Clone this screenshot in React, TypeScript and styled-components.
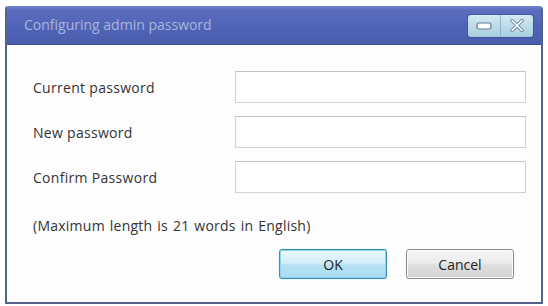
import React from "react";
import styled, { createGlobalStyle } from "styled-components";

const Global = createGlobalStyle`
  html, body { margin: 0; padding: 0; background: #ffffff; }
  body { font-family: "Open Sans", "Noto Sans", sans-serif; }
`;

const Page = styled.div`
  width: 548px;
  height: 306px;
  padding: 6px 0 0 5px;
  box-sizing: border-box;
`;

const Window = styled.div`
  width: 538px;
  height: 298px;
  box-sizing: border-box;
  border: 2px solid #56628e;
  border-top: none;
  border-radius: 3px 4px 0 0;
  background: #fdfdfe;
  display: flex;
  flex-direction: column;
  overflow: hidden;
`;

const TitleBar = styled.div`
  height: 38px;
  flex: none;
  display: flex;
  align-items: center;
  justify-content: space-between;
  padding: 0 8px 0 17px;
  background: linear-gradient(#6f82c8 0%, #5a6cbd 12%, #5064b6 55%, #4a5cae 100%);
  border-bottom: 1px solid #3d4c8e;
`;

const Title = styled.span`
  font-size: 14px;
  color: #a9b5dc;
  margin-top: -1px;
`;

const Controls = styled.div`
  display: flex;
  height: 22px;
  border-radius: 3px;
  overflow: hidden;
  background: linear-gradient(#d3e8f0, #a9cfe0);
  box-shadow: 0 0 0 1px rgba(40, 60, 120, 0.35);
  margin-top: 1px;
`;

const CtrlBtn = styled.div<{ $divider?: boolean }>`
  width: 32px;
  height: 22px;
  display: flex;
  align-items: center;
  justify-content: center;
  border-left: ${(p) => (p.$divider ? "1px solid #8fb3c7" : "none")};
`;

const Body = styled.div`
  flex: 1;
  padding: 26px 15px 0 26px;
  display: flex;
  flex-direction: column;
`;

const Form = styled.div`
  display: grid;
  grid-template-columns: 202px 291px;
  row-gap: 13px;
  align-items: center;
`;

const Label = styled.label`
  font-size: 14px;
  letter-spacing: 0.3px;
  color: #333333;
`;

const Input = styled.div`
  height: 32px;
  box-sizing: border-box;
  border: 1px solid #d2d2d2;
  border-top-color: #c2c2c2;
  background: #ffffff;
`;

const Note = styled.div`
  margin-top: 23px;
  font-size: 14px;
  letter-spacing: 0.25px;
  color: #333333;
  word-spacing: 1px;
`;

const ButtonRow = styled.div`
  display: flex;
  justify-content: flex-end;
  gap: 19px;
  margin-top: 14px;
  padding-right: 12px;
`;

const Button = styled.button<{ $primary?: boolean }>`
  width: 108px;
  height: 30px;
  box-sizing: border-box;
  border-radius: 3px;
  font-family: "Open Sans", "Noto Sans", sans-serif;
  font-size: 14px;
  color: #222;
  padding: 0;
  border: 1px solid ${(p) => (p.$primary ? "#3c8fb4" : "#8a8a8a")};
  background: ${(p) =>
    p.$primary
      ? "linear-gradient(#ecf8fd 0%, #d4eef9 45%, #b5e1f3 55%, #a9dcf1 100%)"
      : "linear-gradient(#f6f6f6 0%, #ececec 45%, #dedede 55%, #d4d4d4 100%)"};
  box-shadow: ${(p) =>
    p.$primary ? "inset 0 0 0 1px #8fd3ee, 0 0 1px #5ab8de" : "inset 0 0 0 1px #fbfbfb"};
`;

export default function App() {
  return (
    <>
      <Global />
      <Page>
        <Window>
          <TitleBar>
            <Title>Configuring admin password</Title>
            <Controls>
              <CtrlBtn>
                <svg width="16" height="8" viewBox="0 0 16 8">
                  <rect x="1" y="1" width="14" height="6" rx="2" fill="#ffffff" stroke="#5b7c9a" strokeWidth="1.2" />
                </svg>
              </CtrlBtn>
              <CtrlBtn $divider>
                <svg width="14" height="13" viewBox="0 0 14 13">
                  <path d="M2 1.5 L12 11.5 M12 1.5 L2 11.5" stroke="#6f8aa3" strokeWidth="3.4" strokeLinecap="round" />
                  <path d="M2 1.5 L12 11.5 M12 1.5 L2 11.5" stroke="#ffffff" strokeWidth="1.6" strokeLinecap="round" />
                </svg>
              </CtrlBtn>
            </Controls>
          </TitleBar>
          <Body>
            <Form>
              <Label>Current password</Label>
              <Input />
              <Label>New password</Label>
              <Input />
              <Label>Confirm Password</Label>
              <Input />
            </Form>
            <Note>(Maximum length is 21 words in English)</Note>
            <ButtonRow>
              <Button $primary>OK</Button>
              <Button>Cancel</Button>
            </ButtonRow>
          </Body>
        </Window>
      </Page>
    </>
  );
}
